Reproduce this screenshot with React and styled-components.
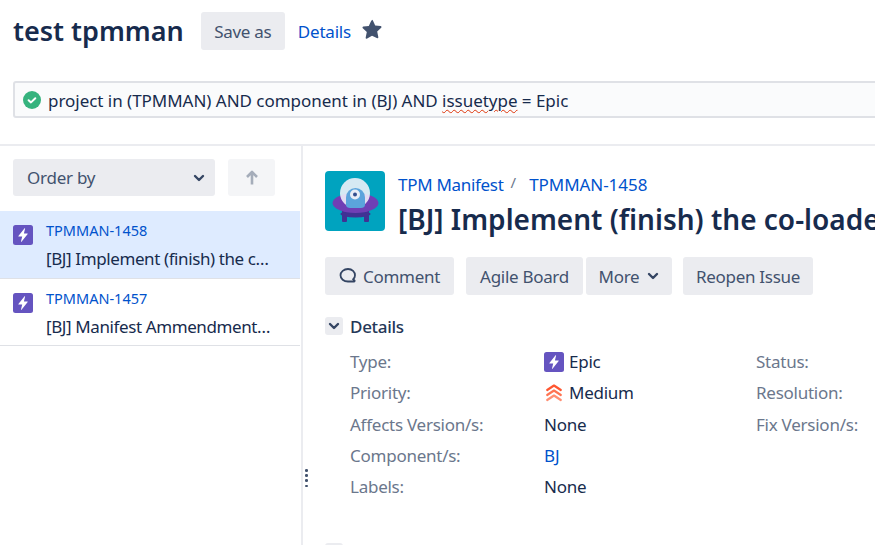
import React from "react";
import styled, { createGlobalStyle } from "styled-components";

const Global = createGlobalStyle`
  html, body { margin: 0; padding: 0; background: #fff; }
  body { width: 875px; height: 545px; overflow: hidden; font-family: "Noto Sans", "Open Sans", sans-serif; font-size: 17px; color: #172b4d; }
  * { box-sizing: border-box; }
`;

const Page = styled.div`
  width: 875px; height: 545px; overflow: hidden; display: flex; flex-direction: column;
`;
const Header = styled.header`
  flex: none; height: 146px; padding: 12px 0 0 13px; border-bottom: 2px solid #ebecf0;
`;
const TitleRow = styled.div`
  display: flex; align-items: center; height: 38px;
`;
const PageTitle = styled.h1`
  margin: 0 17px 0 0; font-size: 27px; line-height: 40px; font-weight: 600; color: #172b4d; white-space: nowrap;
`;
const Button = styled.div`
  flex: none; display: flex; align-items: center; justify-content: center; gap: ${p => p.$gap || 5}px;
  width: ${p => p.$w}px; height: 38px; margin-right: ${p => p.$mr || 0}px;
  background: #ebecf0; border-radius: 3px; color: #42526e; font-size: 17px; letter-spacing: -0.3px; white-space: nowrap;
`;
const Link = styled.a`
  color: #0052cc; letter-spacing: -0.05px; white-space: nowrap;
`;
const ProjectLink = styled(Link)`
  letter-spacing: -0.3px;
`;
const DetailsLink = styled(Link)`
  margin-left: 13px; margin-right: 11px; letter-spacing: -0.2px;
`;
const StarIcon = styled.svg`
  width: 20px; height: 20px; margin-top: -4px; fill: #42526e;
`;
const QueryBar = styled.div`
  margin-top: 31px; height: 37px; width: 900px; display: flex; align-items: center; gap: 7px; padding-left: 8px;
  background: #fafbfc; border: 2px solid #dfe1e6; border-radius: 3px; font-size: 17px; white-space: nowrap;
`;
const QueryText = styled.span`
  letter-spacing: -0.03px; padding-top: 1px;
`;
const Squiggle = styled.span`
  text-decoration: underline wavy #de350b 1px; text-underline-offset: 2px;
`;
const Body = styled.div`
  flex: 1; display: flex; min-height: 0;
`;
const Sidebar = styled.aside`
  flex: none; position: relative; width: 303px; border-right: 2px solid #ebecf0;
`;
const SortBar = styled.div`
  display: flex; gap: 13px; padding: 13px 0 15px 13px;
`;
const Select = styled.div`
  width: 202px; height: 37px; display: flex; align-items: center; justify-content: space-between; padding: 0 10px 0 14px;
  background: #ebecf0; border-radius: 3px; color: #42526e; letter-spacing: -0.25px;
`;
const SortButton = styled.div`
  width: 47px; height: 37px; display: flex; align-items: center; justify-content: center; background: #f4f5f7; border-radius: 3px;
`;
const IssueRow = styled.div`
  width: 300px; height: ${p => p.$h}px; display: flex; gap: 13px; padding: 14px 0 0 13px;
  background: ${p => (p.$active ? "#deebff" : "#fff")}; border-bottom: 1px solid #dfe1e6;
`;
const IssueText = styled.div`
  width: 228px; min-width: 0; margin-top: -2px;
`;
const IssueKey = styled.div`
  font-size: 14.5px; line-height: 14px; height: 20px; color: #0052cc;
`;
const IssueSummary = styled.div`
  font-size: 17px; line-height: 22px; margin-top: 5px; letter-spacing: -0.4px; white-space: nowrap; overflow: hidden; text-overflow: ellipsis; color: #172b4d;
`;
const Handle = styled.div`
  position: absolute; right: -7px; top: 323px; display: flex; flex-direction: column; gap: 2.6px; width: 3px;
`;
const Dot = styled.i`
  display: block; width: 2.6px; height: 2.6px; border-radius: 50%; background: #42526e;
`;
const Main = styled.main`
  flex: 1; min-width: 0; overflow: hidden; padding: 25px 0 0 22px;
`;
const IssueHead = styled.div`
  display: flex; gap: 13px; width: 700px;
`;
const HeadText = styled.div`
  min-width: 0; white-space: nowrap;
`;
const Crumbs = styled.div`
  display: flex; align-items: center; height: 27px; font-size: 17px;
`;
const Slash = styled.span`
  color: #6b778c; margin: -5px 13px 0 7px; font-size: 15px;
`;
const IssueTitle = styled.h2`
  margin: 4px 0 0; font-size: 28px; line-height: 34px; font-weight: 600; color: #172b4d;
`;
const Actions = styled.div`
  display: flex; margin-top: 21px;
`;
const SectionHead = styled.div`
  display: flex; align-items: center; gap: 7px; margin-top: 22px; height: 18px;
`;
const Toggle = styled.div`
  width: 18px; height: 18px; display: flex; align-items: center; justify-content: center; background: #ebecf0; border-radius: 3px;
`;
const SectionTitle = styled.div`
  font-size: 17px; font-weight: 500; letter-spacing: -0.3px; color: #253858;
`;
const Fields = styled.div`
  display: grid; grid-template-columns: 194px 212px 1fr; grid-auto-rows: 31.25px; margin: 11px 0 0 25px; width: 560px; align-items: center;
`;
const Label = styled.div`
  color: #6b778c; letter-spacing: -0.25px; white-space: nowrap;
`;
const Value = styled.div`
  display: flex; align-items: center; gap: 5px; color: #172b4d; letter-spacing: -0.25px; white-space: nowrap;
`;
const ValueLink = styled(Link)``;
const NextSection = styled.div`
  margin-top: 41px; display: flex; gap: 7px;
`;
const NextToggle = styled.div`
  width: 18px; height: 18px; background: #ebecf0; border-radius: 3px;
`;

const Epic = ({ size = 20 }) => (
  <svg width={size} height={size} viewBox="0 0 20 20" style={{ flex: "none" }}>
    <rect width="20" height="20" rx="2.5" fill="#6554c0" />
    <path d="M11.6 3.3 5.4 10.9c-.2.3 0 .7.3.7h3.5l-1.2 5c0 .3.3.4.5.2l6.2-7.7c.2-.3 0-.7-.3-.7h-3.5l1.2-4.9c0-.3-.3-.4-.5-.2Z" fill="#fff" />
  </svg>
);

const Chevron = ({ color = "#344563", w = 12 }) => (
  <svg width={w} height={w} viewBox="0 0 12 12" style={{ flex: "none" }}>
    <path d="M2 4 6 8l4-4" fill="none" stroke={color} strokeWidth="2.4" strokeLinecap="round" strokeLinejoin="round" />
  </svg>
);

const Avatar = () => (
  <svg width="60" height="60" viewBox="0 0 60 60" style={{ flex: "none" }}>
    <rect width="60" height="60" rx="4" fill="#00a3bf" />
    <rect x="17" y="38" width="5" height="13" rx="1" fill="#403294" />
    <rect x="39" y="38" width="5" height="13" rx="1" fill="#403294" />
    <ellipse cx="30.5" cy="43" rx="15" ry="3.5" fill="#403294" />
    <ellipse cx="30.5" cy="32" rx="23" ry="10" fill="#6f3fb5" />
    <rect x="15" y="7" width="30" height="30" rx="15" fill="#f2f3fa" opacity="0.88" />
    <path d="M21 26.5a9.5 9.5 0 0 1 19 0V34c0 2-2 3-4 3H25c-2 0-4-1-4-3Z" fill="#5ba4dc" />
    <circle cx="30" cy="23.5" r="5" fill="#e9edf7" />
    <circle cx="30" cy="23.5" r="2" fill="#344e8f" />
  </svg>
);

const Priority = () => (
  <svg width="20" height="20" viewBox="0 0 20 20" style={{ flex: "none" }}>
    <g fill="none" strokeWidth="2.2" strokeLinecap="round" strokeLinejoin="round">
      <path d="M3.2 7 10 2.5 16.8 7" stroke="#ff5630" />
      <path d="M3.2 12 10 7.5 16.8 12" stroke="#ff7452" />
      <path d="M3.2 17 10 12.5 16.8 17" stroke="#ff8f73" />
    </g>
  </svg>
);

export default function App() {
  return (
    <Page>
      <Global />
      <Header>
        <TitleRow>
          <PageTitle>test tpmman</PageTitle>
          <Button $w={84}>Save as</Button>
          <DetailsLink>Details</DetailsLink>
          <StarIcon viewBox="0 0 20 20">
            <path d="M10 .8c.4 0 .7.2.9.6l2.3 5 5.4.7c.9.1 1.2 1.1.6 1.7l-4 3.7 1.1 5.4c.2.9-.7 1.5-1.5 1.1L10 16.8l-4.8 2.7c-.8.4-1.7-.2-1.5-1.1l1.1-5.4-4-3.7c-.6-.6-.3-1.6.6-1.7l5.4-.7 2.3-5c.2-.4.5-.6.9-.6Z" />
          </StarIcon>
        </TitleRow>
        <QueryBar>
          <svg width="18" height="18" viewBox="0 0 18 18" style={{ flex: "none" }}>
            <circle cx="9" cy="9" r="9" fill="#36b37e" />
            <path d="M5.6 9.2 8 11.4l4.3-4.2" fill="none" stroke="#fff" strokeWidth="2" strokeLinecap="round" strokeLinejoin="round" />
          </svg>
          <QueryText>
            project in (TPMMAN) AND component in (BJ) AND <Squiggle>issuetype</Squiggle> = Epic
          </QueryText>
        </QueryBar>
      </Header>
      <Body>
        <Sidebar>
          <SortBar>
            <Select>
              Order by
              <Chevron />
            </Select>
            <SortButton>
              <svg width="14" height="16" viewBox="0 0 14 16">
                <path d="M7 14.5V2.5M2 7l5-5 5 5" fill="none" stroke="#a5adba" strokeWidth="2.6" strokeLinejoin="round" />
              </svg>
            </SortButton>
          </SortBar>
          <IssueRow $active $h={68}>
            <Epic />
            <IssueText>
              <IssueKey>TPMMAN-1458</IssueKey>
              <IssueSummary>[BJ] Implement (finish) the co-loader for the manifest</IssueSummary>
            </IssueText>
          </IssueRow>
          <IssueRow $h={67}>
            <Epic />
            <IssueText>
              <IssueKey>TPMMAN-1457</IssueKey>
              <IssueSummary>[BJ] Manifest Ammendment support for the loader</IssueSummary>
            </IssueText>
          </IssueRow>
          <Handle>
            <Dot /><Dot /><Dot /><Dot />
          </Handle>
        </Sidebar>
        <Main>
          <IssueHead>
            <Avatar />
            <HeadText>
              <Crumbs>
                <ProjectLink>TPM Manifest</ProjectLink>
                <Slash>/</Slash>
                <Link>TPMMAN-1458</Link>
              </Crumbs>
              <IssueTitle>[BJ] Implement (finish) the co-loader for the manifest</IssueTitle>
            </HeadText>
          </IssueHead>
          <Actions>
            <Button $w={129} $mr={12} $gap={6}>
              <svg width="18" height="18" viewBox="0 0 18 18" style={{ flex: "none" }}>
                <path d="M9 2C4.8 2 1.5 4.8 1.5 8.3s3.3 6.200 7.500 6.200h6c.6 0 .9-.6.5-1l-1.300-1.300c1.200-1 1.800-2.400 1.800-3.900C16 4.800 13.200 2 9 2Z" fill="none" stroke="#344563" strokeWidth="1.8" />
              </svg>
              Comment
            </Button>
            <Button $w={117} $mr={3}>Agile Board</Button>
            <Button $w={86} $mr={11} $gap={8}>
              More
              <Chevron w={12} />
            </Button>
            <Button $w={130}>Reopen Issue</Button>
          </Actions>
          <SectionHead>
            <Toggle><Chevron w={12} /></Toggle>
            <SectionTitle>Details</SectionTitle>
          </SectionHead>
          <Fields>
            <Label>Type:</Label>
            <Value><Epic /> Epic</Value>
            <Label>Status:</Label>
            <Label>Priority:</Label>
            <Value><Priority /> Medium</Value>
            <Label>Resolution:</Label>
            <Label>Affects Version/s:</Label>
            <Value>None</Value>
            <Label>Fix Version/s:</Label>
            <Label>Component/s:</Label>
            <Value><ValueLink>BJ</ValueLink></Value>
            <span />
            <Label>Labels:</Label>
            <Value>None</Value>
            <span />
          </Fields>
          <NextSection>
            <NextToggle />
            <SectionTitle>Description</SectionTitle>
          </NextSection>
        </Main>
      </Body>
    </Page>
  );
}
